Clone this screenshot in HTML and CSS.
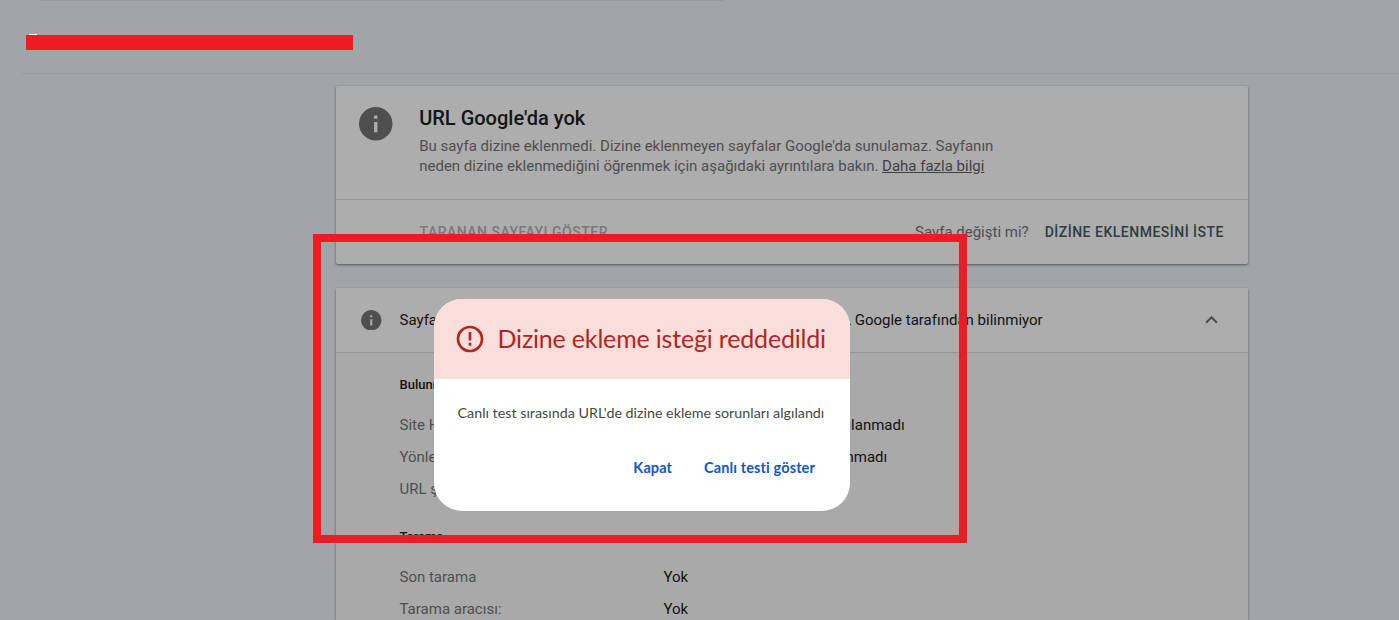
FILE: index.html
```html
<!DOCTYPE html>
<html lang="tr">
<head>
    <meta charset="UTF-8">
    <meta name="viewport" content="width=device-width, initial-scale=1.0">
    <title>URL Denetimi</title>
    <link rel="stylesheet" href="styles.css">
</head>
<body>
    <header class="topbar">
        <div class="search"></div>
    </header>

    <main class="content">
        <section class="card">
            <div class="summary">
                <svg class="info-big" viewBox="2 2 20 20"><path d="M12 2a10 10 0 1 0 0 20 10 10 0 0 0 0-20zm1 15h-2v-6h2v6zm0-8h-2V7h2v2z"/></svg>
                <div>
                    <h1>URL Google'da yok</h1>
                    <p>Bu sayfa dizine eklenmedi. Dizine eklenmeyen sayfalar Google'da sunulamaz. Sayfanın<br>neden dizine eklenmediğini öğrenmek için aşağıdaki ayrıntılara bakın. <a href="#">Daha fazla bilgi</a></p>
                </div>
            </div>
            <div class="actions">
                <span class="action disabled">TARANAN SAYFAYI GÖSTER</span>
                <span class="changed">Sayfa değişti mi?</span>
                <span class="action">DİZİNE EKLENMESİNİ İSTE</span>
            </div>
        </section>

        <section class="card details">
            <div class="details-head">
                <svg class="info-small" viewBox="2 2 20 20"><path d="M12 2a10 10 0 1 0 0 20 10 10 0 0 0 0-20zm1 15h-2v-6h2v6zm0-8h-2V7h2v2z"/></svg>
                <span class="label">Sayfa dizine ekleme</span>
                <span class="value">Sayfa dizine eklenmedi: URL Google tarafından bilinmiyor</span>
                <svg class="chevron" viewBox="0 0 12 8"><path d="M1 7l5-5 5 5"/></svg>
            </div>
            <div class="details-body">
                <h2>Bulunma</h2>
                <div class="row"><span>Site Haritaları</span><b>Yönlendiren site haritası algılanmadı</b></div>
                <div class="row"><span>Yönlendiren sayfa</span><b class="referrer">Yönlendiren bir sayfa algılanmadı</b></div>
                <div class="row"><span>URL şu anda bildirilmeyen diğer kaynaklardan biliniyor olabilir</span></div>
                <h2>Tarama</h2>
                <div class="row"><span>Son tarama</span><b>Yok</b></div>
                <div class="row"><span>Tarama aracısı:</span><b>Yok</b></div>
            </div>
        </section>
    </main>

    <div class="backdrop"></div>

    <div class="dialog">
        <div class="dialog-head">
            <svg viewBox="0 0 28 28"><circle cx="14" cy="14" r="12"/><path d="M14 7v8.5M14 17.7v3"/></svg>
            <span>Dizine ekleme isteği reddedildi</span>
        </div>
        <p class="dialog-text">Canlı test sırasında URL'de dizine ekleme sorunları algılandı</p>
        <div class="dialog-buttons">
            <button class="close">Kapat</button>
            <button class="show">Canlı testi göster</button>
        </div>
    </div>

    <div class="redact"></div>
    <div class="highlight"></div>
</body>
</html>
```

FILE: styles.css
```css
body {
    margin: 0;
    height: 620px;
    overflow: hidden;
    position: relative;
    background-color: #eef3f7;
    font-family: Roboto, Arial, sans-serif;
    font-size: 15px;
    color: #212121;
}
.topbar {
    height: 73px;
    margin-left: 22px;
    border-bottom: 1px solid #dfe3e6;
}
.search {
    width: 684px;
    height: 1px;
    margin-left: 18px;
    background-color: #dde3f5;
}
.content {
    width: 912px;
    margin: 12px 0 0 336px;
}
.card {
    background-color: #fff;
    border-radius: 2px;
    box-shadow: 0 1px 3px rgba(0,0,0,0.35), 0 1px 2px rgba(0,0,0,0.2);
}
.summary {
    display: flex;
    height: 114px;
    box-sizing: border-box;
    padding: 20px 23px 0;
    border-bottom: 1px solid #dcdcdc;
}
.info-big {
    width: 33.5px;
    height: 33.5px;
    margin: 1px 26.7px 0 0;
    fill: #757575;
}
.summary h1 {
    margin: 0;
    font-size: 20px;
    font-weight: 500;
    line-height: 24px;
}
.summary p {
    margin: 6px 0 0;
    line-height: 20px;
    color: #757575;
    white-space: nowrap;
}
.summary a {
    color: #616161;
}
.actions {
    display: flex;
    align-items: center;
    height: 64px;
    padding: 0 24px 0 83.5px;
}
.action {
    padding-bottom: 1px;
    font-size: 14px;
    font-weight: 500;
    letter-spacing: 0.5px;
    color: #455a64;
}
.disabled {
    color: #b3b3b3;
}
.changed {
    margin: 0 16px 0 auto;
    color: #757575;
}
.details {
    height: 332px;
    overflow: hidden;
    margin-top: 24px;
    border-radius: 2px 2px 0 0;
    background-color: #fafafa;
}
.details-head {
    display: flex;
    align-items: center;
    height: 64px;
    padding: 0 30px 0 25px;
    background-color: #fff;
    border-bottom: 1px solid #dcdcdc;
}
.info-small {
    width: 20.5px;
    height: 20.5px;
    margin-right: 18px;
    fill: #757575;
}
.label {
    width: 264px;
}
.value {
    flex: 1;
}
.chevron {
    width: 13px;
    height: 9px;
    margin-bottom: 1px;
    fill: none;
    stroke: #757575;
    stroke-width: 2;
}
.details-body {
    padding: 16px 63.5px 0;
}
.details-body h2 {
    margin: 0;
    font-size: 13px;
    font-weight: 500;
    line-height: 32px;
    height: 40px;
}
.row {
    display: flex;
    height: 32px;
    line-height: 32px;
    color: #757575;
    white-space: nowrap;
}
.row span {
    width: 264px;
}
.row b {
    font-weight: 400;
    color: #212121;
}
.row .referrer {
    padding-left: 3px;
}
.row + h2 {
    margin-top: 16px;
}
.backdrop {
    position: absolute;
    inset: 0;
    background-color: rgba(0,0,0,0.32);
}
.dialog {
    position: absolute;
    left: 434px;
    top: 299px;
    width: 416px;
    height: 212px;
    border-radius: 28px;
    overflow: hidden;
    background-color: #fff;
    font-family: Lato, sans-serif;
    white-space: nowrap;
}
.dialog-head {
    display: flex;
    align-items: center;
    height: 80px;
    padding-left: 21.5px;
    background-color: #f9dedc;
    color: #b3261e;
    font-size: 25px;
    letter-spacing: -0.18px;
}
.dialog-head svg {
    width: 28px;
    height: 28px;
    margin-right: 14px;
    fill: none;
    stroke: #b3261e;
    stroke-width: 2.7;
}
.dialog-head span {
    padding-bottom: 3px;
}
.dialog-text {
    margin: 24px 0 0 23.5px;
    font-size: 14.3px;
    line-height: 20px;
    color: #444746;
}
.dialog-buttons {
    display: flex;
    justify-content: flex-end;
    margin-top: 24px;
    padding-right: 23px;
    gap: 8px;
}
.dialog-buttons button {
    height: 40px;
    padding: 0 12px;
    border: none;
    background: none;
    font-family: Lato, sans-serif;
    font-size: 14.5px;
    font-weight: 700;
    letter-spacing: 0.12px;
    color: #0b57d0;
    cursor: pointer;
}
.redact {
    position: absolute;
    left: 26px;
    top: 35px;
    width: 327px;
    height: 15px;
    background-color: #ed1c24;
}
.redact::before {
    content: "";
    position: absolute;
    left: 3px;
    top: -1px;
    width: 8px;
    height: 1px;
    background-color: #fff;
}
.highlight {
    position: absolute;
    left: 313px;
    top: 234px;
    width: 638px;
    height: 293px;
    border: 8px solid #ed1c24;
}
```
